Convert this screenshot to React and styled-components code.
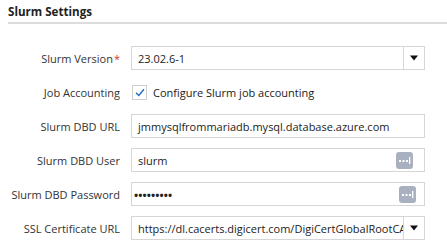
import React from "react";
import styled, { createGlobalStyle } from "styled-components";

const GlobalStyle = createGlobalStyle`
  body {
    margin: 0;
    background: #ffffff;
    font-family: "Open Sans", "Noto Sans", sans-serif;
    color: #222222;
  }
`;

const Page = styled.div`
  width: 447px;
  height: 249px;
  overflow: hidden;
  padding-left: 8px;
  box-sizing: border-box;
`;

const Title = styled.h2`
  margin: 0;
  padding-top: 3px;
  font-size: 11.6px;
  line-height: 17px;
  font-weight: 700;
  color: #222;
`;

const Divider = styled.div`
  height: 2px;
  margin-top: 2px;
  background: #dcdcdc;
`;

const Form = styled.div`
  display: grid;
  grid-template-columns: 112px 294px;
  column-gap: 11px;
  row-gap: 10px;
  margin-top: 22px;
  align-items: center;
`;

const Label = styled.div`
  text-align: right;
  font-size: 11px;
  color: #333;
  white-space: nowrap;
`;

const Required = styled.span`
  color: #d9342b;
  margin-left: 1px;
`;

const Box = styled.div`
  display: flex;
  align-items: center;
  height: 24px;
  box-sizing: border-box;
  border: 1px solid #d6d6d6;
  background: #fff;
`;

const Value = styled.div`
  flex: 1;
  min-width: 0;
  padding-left: ${(p) => (p.$tight ? "2px" : "6px")};
  font-size: 11px;
  color: #222;
  white-space: nowrap;
  overflow: hidden;
`;

const Caret = styled.div`
  width: 20px;
  align-self: stretch;
  border-left: 1px solid #d6d6d6;
  display: flex;
  align-items: center;
  justify-content: center;
`;

const Dots = styled.span`
  font-size: 11px;
  font-weight: 700;
  letter-spacing: 0.1px;
`;

const KeyIcon = styled.div`
  width: 17px;
  height: 17px;
  border-radius: 3px;
  background: #a9b1c0;
  margin-right: ${(p) => p.$right}px;
  display: flex;
  align-items: center;
  justify-content: center;
`;

const CheckRow = styled.label`
  display: flex;
  align-items: center;
  gap: 6px;
  height: 24px;
  font-size: 11px;
  color: #222;
`;

const CheckBox = styled.span`
  width: 15px;
  height: 15px;
  box-sizing: border-box;
  border: 1px solid #cfcfcf;
  margin-left: 1px;
  display: flex;
  align-items: center;
  justify-content: center;
`;

function Arrow() {
  return (
    <svg width="8" height="6" viewBox="0 0 8 6">
      <path d="M0 0.5 H8 L4 5.5 Z" fill="#111" />
    </svg>
  );
}

function Ellipsis() {
  return (
    <svg width="13" height="9" viewBox="0 0 13 9">
      <rect x="1" y="4" width="2" height="2" fill="#fff" />
      <rect x="4.5" y="4" width="2" height="2" fill="#fff" />
      <rect x="8" y="4" width="2" height="2" fill="#fff" />
      <rect x="11" y="1" width="1.3" height="7" fill="#fff" />
    </svg>
  );
}

export default function App() {
  return (
    <Page>
      <GlobalStyle />
      <Title>Slurm Settings</Title>
      <Divider />
      <Form>
        <Label>
          Slurm Version<Required>*</Required>
        </Label>
        <Box>
          <Value>23.02.6-1</Value>
          <Caret>
            <Arrow />
          </Caret>
        </Box>

        <Label>Job Accounting</Label>
        <CheckRow>
          <CheckBox>
            <svg width="10" height="9" viewBox="0 0 10 9">
              <path d="M1 4.8 L3.8 7.4 L9 1.2" fill="none" stroke="#1c6fc4" strokeWidth="1.4" />
            </svg>
          </CheckBox>
          Configure Slurm job accounting
        </CheckRow>

        <Label>Slurm DBD URL</Label>
        <Box>
          <Value>jmmysqlfrommariadb.mysql.database.azure.com</Value>
        </Box>

        <Label>Slurm DBD User</Label>
        <Box>
          <Value>slurm</Value>
          <KeyIcon $right={11}>
            <Ellipsis />
          </KeyIcon>
        </Box>

        <Label>Slurm DBD Password</Label>
        <Box>
          <Value $tight>
            <Dots>•••••••••</Dots>
          </Value>
          <KeyIcon $right={8}>
            <Ellipsis />
          </KeyIcon>
        </Box>

        <Label>SSL Certificate URL</Label>
        <Box>
          <Value>https://dl.cacerts.digicert.com/DigiCertGlobalRootCA.crt.pem</Value>
          <Caret>
            <Arrow />
          </Caret>
        </Box>
      </Form>
    </Page>
  );
}
